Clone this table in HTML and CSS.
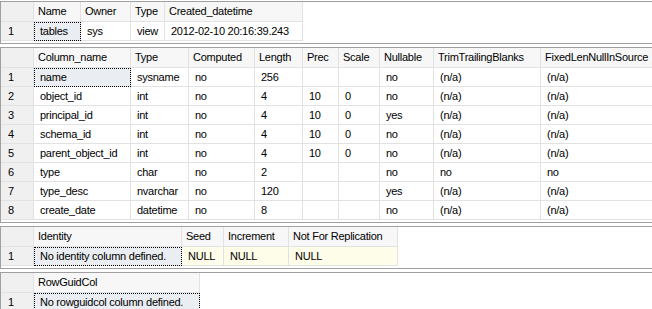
FILE: index.html
```html
<!DOCTYPE html>
<html>
<head>
<meta charset="utf-8">
<title>sp_help results</title>
<link rel="stylesheet" href="styles.css">
</head>
<body>
<div class="panel">
  <div class="grid g1">
    <div class="c hd rh"></div><div class="c hd">Name</div><div class="c hd">Owner</div><div class="c hd">Type</div><div class="c hd">Created_datetime</div>
    <div class="c rh">1</div><div class="c sel">tables</div><div class="c">sys</div><div class="c">view</div><div class="c">2012-02-10 20:16:39.243</div>
  </div>
</div>
<div class="panel">
  <div class="grid g2">
    <div class="c hd rh"></div><div class="c hd">Column_name</div><div class="c hd">Type</div><div class="c hd">Computed</div><div class="c hd">Length</div><div class="c hd">Prec</div><div class="c hd">Scale</div><div class="c hd">Nullable</div><div class="c hd">TrimTrailingBlanks</div><div class="c hd">FixedLenNullInSource</div>
    <div class="c rh">1</div><div class="c sel">name</div><div class="c">sysname</div><div class="c">no</div><div class="c">256</div><div class="c"></div><div class="c"></div><div class="c">no</div><div class="c">(n/a)</div><div class="c">(n/a)</div>
    <div class="c rh">2</div><div class="c">object_id</div><div class="c">int</div><div class="c">no</div><div class="c">4</div><div class="c">10</div><div class="c">0</div><div class="c">no</div><div class="c">(n/a)</div><div class="c">(n/a)</div>
    <div class="c rh">3</div><div class="c">principal_id</div><div class="c">int</div><div class="c">no</div><div class="c">4</div><div class="c">10</div><div class="c">0</div><div class="c">yes</div><div class="c">(n/a)</div><div class="c">(n/a)</div>
    <div class="c rh">4</div><div class="c">schema_id</div><div class="c">int</div><div class="c">no</div><div class="c">4</div><div class="c">10</div><div class="c">0</div><div class="c">no</div><div class="c">(n/a)</div><div class="c">(n/a)</div>
    <div class="c rh">5</div><div class="c">parent_object_id</div><div class="c">int</div><div class="c">no</div><div class="c">4</div><div class="c">10</div><div class="c">0</div><div class="c">no</div><div class="c">(n/a)</div><div class="c">(n/a)</div>
    <div class="c rh">6</div><div class="c">type</div><div class="c">char</div><div class="c">no</div><div class="c">2</div><div class="c"></div><div class="c"></div><div class="c">no</div><div class="c">no</div><div class="c">no</div>
    <div class="c rh">7</div><div class="c">type_desc</div><div class="c">nvarchar</div><div class="c">no</div><div class="c">120</div><div class="c"></div><div class="c"></div><div class="c">yes</div><div class="c">(n/a)</div><div class="c">(n/a)</div>
    <div class="c rh">8</div><div class="c">create_date</div><div class="c">datetime</div><div class="c">no</div><div class="c">8</div><div class="c"></div><div class="c"></div><div class="c">no</div><div class="c">(n/a)</div><div class="c">(n/a)</div>
  </div>
</div>
<div class="panel">
  <div class="grid g3">
    <div class="c hd rh"></div><div class="c hd">Identity</div><div class="c hd">Seed</div><div class="c hd">Increment</div><div class="c hd">Not For Replication</div>
    <div class="c rh">1</div><div class="c sel">No identity column defined.</div><div class="c yl">NULL</div><div class="c yl">NULL</div><div class="c yl">NULL</div>
  </div>
</div>
<div class="panel">
  <div class="grid g4">
    <div class="c hd rh"></div><div class="c hd">RowGuidCol</div>
    <div class="c rh">1</div><div class="c sel">No rowguidcol column defined.</div>
  </div>
</div>
</body>
</html>
```
FILE: styles.css
```css
* { box-sizing: border-box; }
html, body { margin: 0; padding: 0; background: #fff; }
body {
  font-family: "Liberation Sans", Arial, sans-serif;
  font-size: 11px;
  letter-spacing: -0.25px;
  color: #000;
  padding-top: 1px;
  width: 652px;
  height: 309px;
  overflow: hidden;
}
.panel {
  border: 1px solid #a0a0a0;
  border-right: 0;
  padding-bottom: 2px;
  margin-bottom: 3px;
}
.grid {
  display: grid;
  grid-template-rows: 20px;
  grid-auto-rows: 19px;
  justify-content: start;
}
.g1 { grid-template-columns: 33px 47px 50px 34px 138px; }
.g2 { grid-template-columns: 33px 97px 58px 66px 48px 36px 41px 54px 107px 120px; }
.g3 { grid-template-columns: 33px 148px 42px 65px 109px; }
.g4 { grid-template-columns: 33px 166px; }
.c {
  border-right: 1px solid #e2e2e2;
  border-bottom: 1px solid #e2e2e2;
  padding-left: 6px;
  line-height: 18px;
  white-space: nowrap;
  overflow: hidden;
}
.hd {
  background: #f7f7f7;
  padding-left: 4px;
  line-height: 19px;
}
.rh {
  background: #f0f0f0;
  padding-left: 7px;
}
.sel {
  background: #eaedf1;
  outline: 1px dotted #000;
  outline-offset: -1px;
}
.yl { background: #fefde9; }
```
